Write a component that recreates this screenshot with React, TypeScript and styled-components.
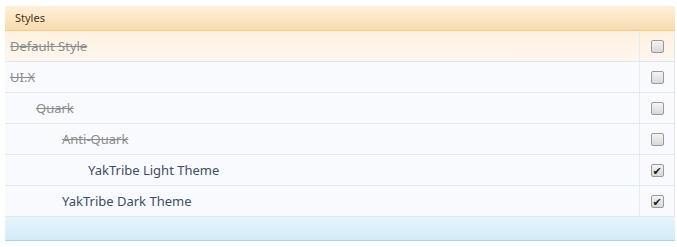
import styled, { createGlobalStyle } from 'styled-components';

interface StyleItem {
  title: string;
  depth: number;
  disabled: boolean;
  checked: boolean;
  highlight?: boolean;
}

const styles: StyleItem[] = [
  { title: 'Default Style', depth: 0, disabled: true, checked: false, highlight: true },
  { title: 'UI.X', depth: 0, disabled: true, checked: false },
  { title: 'Quark', depth: 1, disabled: true, checked: false },
  { title: 'Anti-Quark', depth: 2, disabled: true, checked: false },
  { title: 'YakTribe Light Theme', depth: 3, disabled: false, checked: true },
  { title: 'YakTribe Dark Theme', depth: 2, disabled: false, checked: true },
];

const GlobalStyle = createGlobalStyle`
  body {
    margin: 0;
    background: #ffffff;
    font-family: 'Noto Sans', 'DejaVu Sans', sans-serif;
  }
`;

const App = () => {
  return (
    <>
      <GlobalStyle />
      <StyleList>
        <ListHeader>Styles</ListHeader>
        {styles.map((item) => (
          <StyleRow key={item.title} $highlight={item.highlight}>
            <StyleTitle $depth={item.depth} $disabled={item.disabled}>
              {item.title}
            </StyleTitle>
            <ToggleCell>
              <CheckBox>{item.checked ? '✔' : ''}</CheckBox>
            </ToggleCell>
          </StyleRow>
        ))}
        <ListFooter />
      </StyleList>
    </>
  );
};

export default App;

const StyleList = styled.div`
  margin: 6px 2px 0 5px;
  width: 670px;
`;

const ListHeader = styled.div`
  height: 24px;
  line-height: 24px;
  padding-left: 10px;
  font-size: 11px;
  color: #4b3219;
  background: linear-gradient(to bottom, #fdf0da, #f9dbae);
  border-bottom: 1px solid #f0c98c;
`;

const StyleRow = styled.div<{ $highlight?: boolean }>`
  display: flex;
  height: 30px;
  border-bottom: 1px solid #dfeaf0;
  background: ${({ $highlight }) =>
    $highlight ? 'linear-gradient(to bottom, #fdf1e0, #fef7ee)' : '#f9fafd'};
`;

const StyleTitle = styled.div<{ $depth: number; $disabled: boolean }>`
  flex: 1;
  display: flex;
  align-items: center;
  padding-left: ${({ $depth }) => 5 + $depth * 26}px;
  font-size: 13px;
  color: ${({ $disabled }) => ($disabled ? '#8c8c8c' : '#3d4d63')};
  text-decoration: ${({ $disabled }) => ($disabled ? 'line-through' : 'none')};
`;

const ToggleCell = styled.div`
  width: 34px;
  display: flex;
  align-items: center;
  justify-content: center;
  border-left: 1px solid #e3ecf2;
  border-right: 1px solid #e3ecf2;
`;

const CheckBox = styled.span`
  width: 11px;
  height: 11px;
  border: 1px solid #9a9a9a;
  border-radius: 2px;
  background: linear-gradient(to bottom, #f4f4f4, #d8d8d8);
  display: flex;
  align-items: center;
  justify-content: center;
  font-size: 11px;
  font-weight: bold;
  line-height: 1;
  color: #1e1e1e;
`;

const ListFooter = styled.div`
  height: 23px;
  background: linear-gradient(to bottom, #e6f4fb, #d3ebf7);
  border-bottom: 1px solid #a9d2e8;
`;
